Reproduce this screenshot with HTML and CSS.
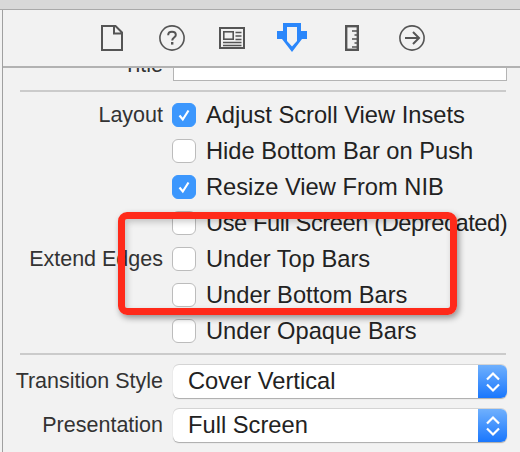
FILE: index.html
```html
<!DOCTYPE html>
<html lang="en">
<head>
<meta charset="utf-8">
<title>Attributes Inspector</title>
<link rel="stylesheet" href="styles.css">
</head>
<body>
<div class="window">
  <div class="titlebar"></div>
  <div class="inspector">
    <div class="toolbar">
      <svg class="icon doc" width="22" height="26" viewBox="0 0 22 26"><path d="M1 1H14.500L21 7.500V25H1Z M13 1V8.500H21" fill="none" stroke="#555" stroke-width="2"/></svg>
      <svg class="icon help" width="26" height="26" viewBox="0 0 26 26"><circle cx="13" cy="13" r="12.100" fill="none" stroke="#555" stroke-width="1.600"/><path d="M9.200 10.200C9.200 7.800 10.900 6.800 13 6.800C15.200 6.800 16.800 8 16.800 10C16.800 12.500 13.200 12.600 13.200 15.500" fill="none" stroke="#555" stroke-width="2"/><rect x="12" y="17" width="2.400" height="2.600" fill="#555"/></svg>
      <svg class="icon news" width="26" height="22" viewBox="0 0 26 22"><rect x="1" y="1" width="24" height="20" fill="none" stroke="#555" stroke-width="2"/><rect x="4.800" y="4.800" width="9.400" height="7.400" fill="none" stroke="#555" stroke-width="1.600"/><path d="M16.500 5.500H22.500M16.500 9H22.500M16.500 12.500H22.500M4 15.500H22.500M4 18.500H22.500" stroke="#555" stroke-width="1.400"/></svg>
      <svg class="icon pin" width="30" height="30" viewBox="0 0 30 30"><path d="M6 0H24V8H30V16H25L15 29L5 16H0V8H6Z" fill="#2b87fb"/><path d="M10 4H20V18L15 23.500L10 18Z" fill="#f2f2f2"/></svg>
      <svg class="icon ruler" width="14" height="26" viewBox="0 0 14 26"><rect x="1.200" y="1.200" width="11.600" height="23.600" fill="none" stroke="#555" stroke-width="2.400"/><path d="M7 6H13M9.500 10H13M7 14H13M9.500 18H13M7 22H13" stroke="#555" stroke-width="1.600"/></svg>
      <svg class="icon arrow" width="26" height="26" viewBox="0 0 26 26"><circle cx="13" cy="13" r="12.100" fill="none" stroke="#555" stroke-width="1.600"/><path d="M6 13H20M14 7L20 13L14 19" fill="none" stroke="#555" stroke-width="2"/></svg>
    </div>
    <div class="panel">
      <div class="title-row">
        <span class="label">Title</span>
        <div class="input"></div>
      </div>
      <hr class="divider first">
      <div class="checks">
        <div class="row"><span class="label">Layout</span><span class="box on"><svg width="14" height="14" viewBox="0 0 14 14"><path d="M2.500 7.500L5.800 11.500L11.500 2.500" fill="none" stroke="#fff" stroke-width="2.200"/></svg></span><span class="text">Adjust Scroll View Insets</span></div>
        <div class="row"><span class="label"></span><span class="box"></span><span class="text">Hide Bottom Bar on Push</span></div>
        <div class="row"><span class="label"></span><span class="box on"><svg width="14" height="14" viewBox="0 0 14 14"><path d="M2.500 7.500L5.800 11.500L11.500 2.500" fill="none" stroke="#fff" stroke-width="2.200"/></svg></span><span class="text">Resize View From NIB</span></div>
        <div class="row"><span class="label"></span><span class="box"></span><span class="text tight">Use Full Screen (Deprecated)</span></div>
        <div class="row"><span class="label">Extend Edges</span><span class="box"></span><span class="text">Under Top Bars</span></div>
        <div class="row"><span class="label"></span><span class="box"></span><span class="text">Under Bottom Bars</span></div>
        <div class="row"><span class="label"></span><span class="box"></span><span class="text">Under Opaque Bars</span></div>
      </div>
      <hr class="divider second">
      <div class="selects">
        <div class="select-row"><span class="label">Transition Style</span><div class="select"><span class="value">Cover Vertical</span><span class="stepper"><svg width="16" height="24" viewBox="0 0 16 24"><path d="M2 9.500L8 3.500L14 9.500M2 14.500L8 20.500L14 14.500" fill="none" stroke="#fff" stroke-width="2.200"/></svg></span></div></div>
        <div class="select-row"><span class="label">Presentation</span><div class="select"><span class="value">Full Screen</span><span class="stepper"><svg width="16" height="24" viewBox="0 0 16 24"><path d="M2 9.500L8 3.500L14 9.500M2 14.500L8 20.500L14 14.500" fill="none" stroke="#fff" stroke-width="2.200"/></svg></span></div></div>
      </div>
    </div>
  </div>
  <div class="highlight"></div>
</div>
</body>
</html>
```
FILE: styles.css
```css
* { box-sizing: border-box; }
html, body { margin: 0; padding: 0; }
body {
  width: 520px;
  height: 452px;
  overflow: hidden;
  background: #f2f2f2;
  font-family: "Liberation Sans", Arial, sans-serif;
  color: #222;
}
.window { position: relative; width: 520px; height: 452px; }
.titlebar { height: 10px; background: #d8d8d8; border-bottom: 1px solid #a9a9a9; }
.inspector { height: 442px; margin-left: 2px; border-left: 1px solid #a0a0a0; display: flex; flex-direction: column; }
.toolbar {
  height: 58px;
  flex: none;
  border-bottom: 2px solid #b2b2b2;
  display: flex;
  align-items: center;
  padding-left: 98px;
  background: #f2f2f2;
}
.icon { flex: none; display: block; }
.help { margin-left: 36px; }
.news { margin-left: 34px; }
.pin { margin-left: 32px; }
.ruler { margin-left: 38px; }
.arrow { margin-left: 40px; }
.panel { flex: 1; overflow: hidden; }
.label {
  width: 160px;
  flex: none;
  text-align: right;
  font-size: 21.500px;
  color: #333;
  white-space: nowrap;
}
.title-row { display: flex; align-items: flex-start; height: 13px; }
.title-row .label { line-height: 24px; height: 24px; margin-top: -15px; }
.input { width: 334px; height: 13px; margin-left: 10px; background: #fff; border: 1px solid #b4b4b4; border-top: 0; }
.divider { border: 0; height: 2px; background: #cbcbcb; width: 486px; margin: 0 0 0 17px; }
.divider.first { margin-top: 9px; }
.divider.second { margin-top: 4px; }
.checks { display: flex; flex-direction: column; margin-top: 5px; }
.row { display: flex; align-items: center; height: 36px; }
.box {
  width: 24px;
  height: 24px;
  flex: none;
  margin-left: 9px;
  border-radius: 6px;
  background: #fff;
  border: 1px solid #bcbcbc;
  display: flex;
  align-items: center;
  justify-content: center;
}
.box.on { background: #3c97fd; border-color: #3c97fd; }
.text { margin-left: 10px; font-size: 23.700px; white-space: nowrap; color: #222; }
.text.tight { letter-spacing: -0.430px; }
.selects { display: flex; flex-direction: column; gap: 11px; margin-top: 10px; }
.select-row { display: flex; align-items: center; height: 33px; }
.select {
  width: 334px;
  height: 33px;
  margin-left: 10px;
  background: #fff;
  border-radius: 6px;
  box-shadow: 0 1px 1px #aaa, 0 -1px 0 #d4d4d4;
  display: flex;
  align-items: center;
  justify-content: space-between;
  overflow: hidden;
}
.value { margin-left: 15px; font-size: 23.700px; color: #222; white-space: nowrap; }
.stepper {
  width: 29px;
  height: 33px;
  background: linear-gradient(#6fb0fd, #1a77fd);
  display: flex;
  align-items: center;
  justify-content: center;
}
.highlight {
  position: absolute;
  left: 118px;
  top: 212px;
  width: 339px;
  height: 103px;
  border: 7px solid #ff2a1a;
  border-radius: 9px;
  box-shadow: 2px 3px 6px rgba(0,0,0,.4), inset 2px 3px 6px rgba(0,0,0,.2);
}
```
